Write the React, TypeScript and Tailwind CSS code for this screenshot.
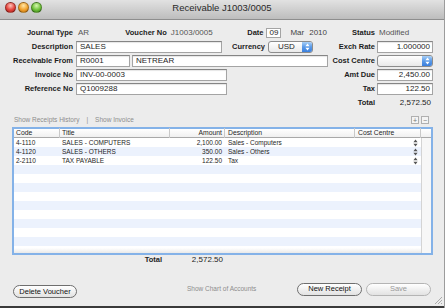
import React from "react";

const lines = [
  { code: "4-1110", title: "SALES - COMPUTERS", amount: "2,100.00", desc: "Sales - Computers" },
  { code: "4-1120", title: "SALES - OTHERS", amount: "350.00", desc: "Sales - Others" },
  { code: "2-2110", title: "TAX PAYABLE", amount: "122.50", desc: "Tax" },
];

const Label = ({ w, children }: { w: string; children: React.ReactNode }) => (
  <div className={`${w} shrink-0 text-right text-[7.5px] font-bold text-[#1c1c1c]`}>{children}</div>
);

const Field = ({ w, value, right }: { w: string; value?: string; right?: boolean }) => (
  <div
    className={`${w} ${right ? "justify-end pr-[2px]" : "pl-[3px]"} flex h-[12px] shrink-0 items-center border border-[#a4a4a4] border-t-[#858585] bg-white text-[8px] text-[#1e1e1e] shadow-[inset_0_1px_1px_rgba(0,0,0,0.1)]`}
  >
    {value}
  </div>
);

const Stepper = ({ color = "white" }: { color?: string }) => (
  <svg width="5" height="8" viewBox="0 0 5 8">
    <path d="M2.5 0.6 L4.6 3.2 H0.4Z M2.5 7.4 L4.6 4.8 H0.4Z" fill={color} />
  </svg>
);

const Popup = ({ w, value }: { w: string; value?: string }) => (
  <div
    className={`${w} flex h-[12px] shrink-0 items-center rounded-[3px] border border-[#8c8c8c] bg-linear-to-b from-white to-[#e9e9e9] text-[8px] text-[#1e1e1e]`}
  >
    <span className="pl-[9px]">{value}</span>
    <div className="ml-auto flex h-full w-[10px] items-center justify-center rounded-r-[2px] bg-linear-to-b from-[#a9d0f7] via-[#5a9ae8] to-[#3b7fdd]">
      <Stepper />
    </div>
  </div>
);

const Light = ({ cls }: { cls: string }) => (
  <div className={`h-[11px] w-[11px] rounded-full border border-black/30 ${cls}`} />
);

const Pill = ({ w, children, disabled }: { w: string; children: React.ReactNode; disabled?: boolean }) => (
  <button
    className={`${w} h-[13px] shrink-0 rounded-full border bg-linear-to-b from-white to-[#e2e2e2] text-[7.5px] leading-none ${
      disabled ? "border-[#b4b4b4] text-[#9a9a9a]" : "border-[#6e6e6e] text-[#111]"
    }`}
  >
    {children}
  </button>
);

export default function App() {
  const stripes = Array.from({ length: 12 }, (_, i) => i);

  return (
    <div className="relative flex h-[308px] w-[445px] flex-col overflow-hidden border-r border-[#9c9c9c] bg-[#ececec] font-['Liberation_Sans',Arial,sans-serif]">
      {/* title bar */}
      <div className="relative flex h-[20px] shrink-0 items-start border-b border-[#8e8e8e] bg-linear-to-b from-[#e2e2e2] to-[#bdbdbd]">
        <div className="flex gap-[2px] pl-[5px] pt-[2px]">
          <Light cls="bg-[radial-gradient(circle_at_50%_30%,#ffc2b8,#e4453d_55%,#a41d17)]" />
          <Light cls="bg-[radial-gradient(circle_at_50%_30%,#ffe7a8,#f2a22c_55%,#b66a0c)]" />
          <Light cls="bg-[radial-gradient(circle_at_50%_30%,#d8f7b0,#6fc23b_55%,#3a7d18)]" />
        </div>
        <div className="absolute inset-x-0 top-[2px] text-center text-[9.5px] leading-[11px] text-[#2a2a2a]">
          Receivable J1003/0005
        </div>
      </div>

      {/* header form */}
      <div className="flex flex-col pt-[6px]">
        <div className="flex h-[14px] items-center">
          <div className="flex w-[327px] items-center">
            <Label w="w-[73px]">Journal Type</Label>
            <div className="w-[30px] pl-[5px] text-[8px] text-[#555]">AR</div>
            <Label w="w-[64px]">Voucher No</Label>
            <div className="w-[70px] pl-[4px] text-[8px] text-[#555]">J1003/0005</div>
            <Label w="w-[27px]">Date</Label>
            <div className="ml-[3px] flex h-[10px] w-[15px] items-center border border-[#a4a4a4] bg-white pl-[2px] text-[8px] text-[#1e1e1e]">
              09
            </div>
            <div className="ml-[9px] text-[8px] text-[#444]">Mar</div>
            <div className="ml-[5px] text-[8px] text-[#444]">2010</div>
          </div>
          <Label w="w-[48px]">Status</Label>
          <div className="pl-[4px] text-[8px] text-[#555]">Modified</div>
        </div>

        <div className="flex h-[14px] items-center">
          <div className="flex w-[327px] items-center">
            <Label w="w-[73px]">Description</Label>
            <div className="ml-[3px]">
              <Field w="w-[146px]" value="SALES" />
            </div>
            <Label w="w-[43px]">Currency</Label>
            <div className="ml-[3px]">
              <Popup w="w-[45px]" value="USD" />
            </div>
          </div>
          <Label w="w-[48px]">Exch Rate</Label>
          <div className="ml-[2px]">
            <Field w="w-[56px]" value="1.000000" right />
          </div>
        </div>

        <div className="flex h-[14px] items-center">
          <div className="flex w-[327px] items-center">
            <Label w="w-[73px]">Receivable From</Label>
            <div className="ml-[3px]">
              <Field w="w-[54px]" value="R0001" />
            </div>
            <div className="ml-[2px]">
              <Field w="w-[196px]" value="NETREAR" />
            </div>
          </div>
          <Label w="w-[48px]">Cost Centre</Label>
          <div className="ml-[2px]">
            <Popup w="w-[56px]" />
          </div>
        </div>

        <div className="flex h-[14px] items-center">
          <div className="flex w-[327px] items-center">
            <Label w="w-[73px]">Invoice No</Label>
            <div className="ml-[3px]">
              <Field w="w-[151px]" value="INV-00-0003" />
            </div>
          </div>
          <Label w="w-[48px]">Amt Due</Label>
          <div className="ml-[2px]">
            <Field w="w-[56px]" value="2,450.00" right />
          </div>
        </div>

        <div className="flex h-[14px] items-center">
          <div className="flex w-[327px] items-center">
            <Label w="w-[73px]">Reference No</Label>
            <div className="ml-[3px]">
              <Field w="w-[151px]" value="Q1009288" />
            </div>
          </div>
          <Label w="w-[48px]">Tax</Label>
          <div className="ml-[2px]">
            <Field w="w-[56px]" value="122.50" right />
          </div>
        </div>

        <div className="flex h-[14px] items-center">
          <div className="w-[327px]" />
          <Label w="w-[48px]">Total</Label>
          <div className="ml-[2px] w-[56px] pr-[2px] text-right text-[8px] text-[#1e1e1e]">2,572.50</div>
        </div>
      </div>

      {/* links + add/remove */}
      <div className="mt-[5px] flex h-[10px] items-center text-[6.5px] text-[#8c8c8c]">
        <span className="pl-[14px]">Show Receipts History</span>
        <span className="px-[7px]">|</span>
        <span>Show Invoice</span>
        <div className="ml-auto mr-[15px] flex gap-[2px]">
          <div className="flex h-[8px] w-[8px] items-center justify-center border border-[#b0b0b0] bg-[#f4f4f4] text-[7px] leading-none text-[#777]">
            +
          </div>
          <div className="flex h-[8px] w-[8px] items-center justify-center border border-[#b0b0b0] bg-[#f4f4f4] text-[7px] leading-none text-[#777]">
            −
          </div>
        </div>
      </div>

      {/* grid */}
      <div className="ml-[12px] mt-[2px] flex h-[128px] w-[421px] flex-col border-2 border-[#84b2e8] bg-white">
        <div className="flex h-[9px] shrink-0 items-center border-b border-[#a9a9a9] bg-linear-to-b from-white to-[#f0f0f0] text-[6.8px] text-[#1e1e1e]">
          <div className="w-[46px] border-r border-[#c9c9c9] pl-[2px]">Code</div>
          <div className="w-[110px] border-r border-[#c9c9c9] pl-[2px]">Title</div>
          <div className="w-[55px] border-r border-[#c9c9c9] pr-[2px] text-right">Amount</div>
          <div className="w-[130px] border-r border-[#c9c9c9] pl-[3px]">Description</div>
          <div className="w-[66px] border-r border-[#c9c9c9] pl-[3px]">Cost Centre</div>
          <div className="w-[10px]" />
        </div>
        <div className="flex flex-1">
          <div className="flex w-[407px] flex-col">
            {stripes.map((i) => {
              const l = lines[i];
              return (
                <div
                  key={i}
                  className={`flex h-[9px] shrink-0 items-center text-[6.5px] text-[#1e1e1e] ${
                    i % 2 ? "bg-[#ecf2fd]" : "bg-white"
                  }`}
                >
                  <div className="w-[46px] pl-[2px]">{l?.code}</div>
                  <div className="w-[110px] pl-[2px]">{l?.title}</div>
                  <div className="w-[55px] pr-[3px] text-right">{l?.amount}</div>
                  <div className="w-[130px] pl-[3px]">{l?.desc}</div>
                  <div className="flex w-[66px] justify-end pr-[3px]">{l && <Stepper color="#555" />}</div>
                </div>
              );
            })}
            <div className="mt-auto h-[5px] bg-linear-to-b from-white to-[#e9e9e9]" />
          </div>
          <div className="w-[10px] border-l border-[#d4d4d4] bg-[#f7f7f7]" />
        </div>
      </div>

      {/* total under grid */}
      <div className="flex h-[10px] items-center text-[7.5px] text-[#1e1e1e]">
        <div className="w-[162px] text-right font-bold">Total</div>
        <div className="w-[61px] text-right text-[8px]">2,572.50</div>
      </div>

      {/* buttons */}
      <div className="mt-[17px] flex h-[14px] items-center">
        <div className="ml-[13px]">
          <Pill w="w-[64px]">Delete Voucher</Pill>
        </div>
        <span className="ml-[110px] text-[6.5px] text-[#8c8c8c]">Show Chart of Accounts</span>
        <div className="ml-auto mr-[13px] flex gap-[4px]">
          <Pill w="w-[65px]">New Receipt</Pill>
          <Pill w="w-[65px]" disabled>
            Save
          </Pill>
        </div>
      </div>

      <div className="flex-1" />
      <div className="h-[2px] shrink-0 bg-[#3a3a3a]" />

      {/* resize grip */}
      <svg className="absolute bottom-[3px] right-[1px]" width="9" height="9" viewBox="0 0 9 9">
        <path d="M8 1 L1 8 M8 4 L4 8 M8 7 L7 8" stroke="#9a9a9a" strokeWidth="0.8" />
      </svg>
    </div>
  );
}
